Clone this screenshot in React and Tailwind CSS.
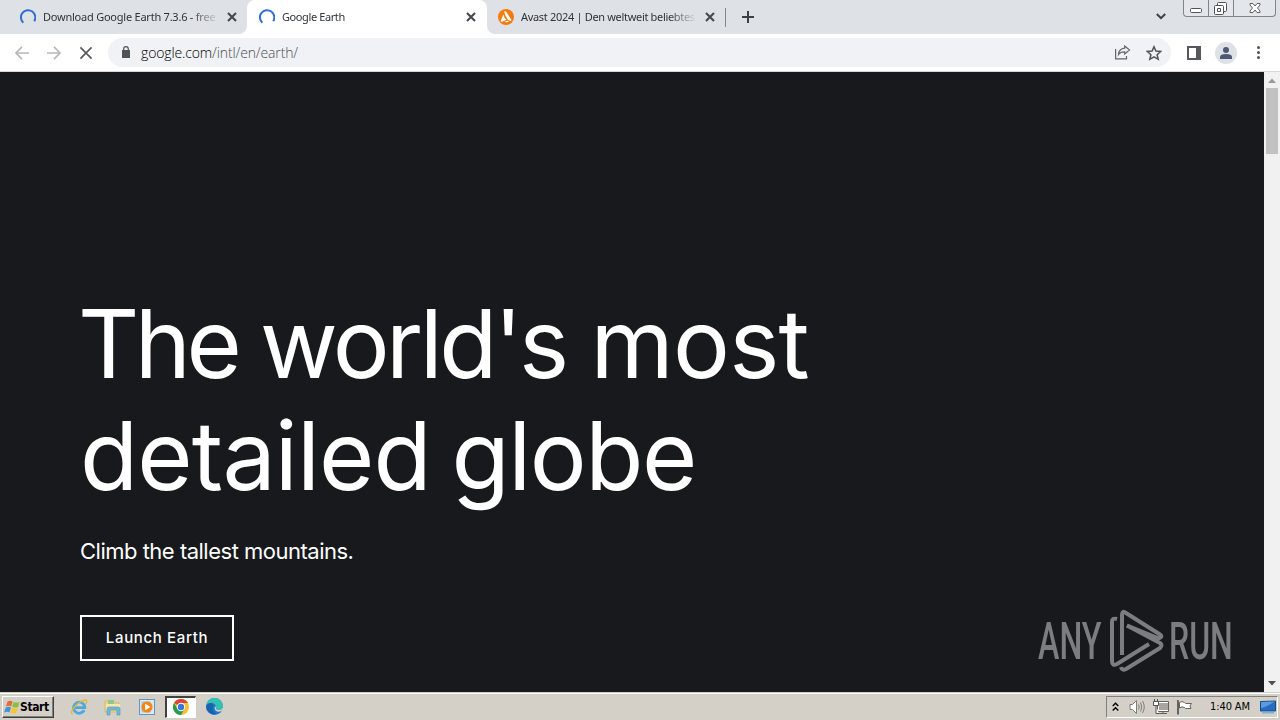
import React from "react";

function Spinner() {
  return (
    <svg className="h-4 w-4 shrink-0" viewBox="0 0 16 16" fill="none">
      <path d="M3.300 13.700A7.200 7.200 0 1 1 14.200 12.200" stroke="#2f6fcf" strokeWidth="2" />
    </svg>
  );
}

function Avast() {
  return (
    <svg className="h-4 w-4 shrink-0" viewBox="0 0 16 16">
      <circle cx="8" cy="8" r="8" fill="#f57c0a" />
      <path d="M6.200 2.700Q7.200 1.600 8.200 2.800L13.300 10.700Q13.600 12 12.300 12L10.200 11Q6.800 7 6.200 2.700Z" fill="#fff" />
      <path d="M5.300 5.600Q6.100 9.300 8.400 10.800L4.100 12.700Q2.500 12.900 2.800 11.400ZM6.500 12.700L9.600 11.800 11 12.800Q8.800 13.800 6.500 12.700Z" fill="#fff" />
    </svg>
  );
}

function Cross({ className, color = "#45484d", width = 2 }) {
  return (
    <svg className={className} viewBox="0 0 10 10">
      <path d="M1 1L9 9M9 1L1 9" stroke={color} strokeWidth={width} fill="none" />
    </svg>
  );
}

function Tab({ icon, title, textClass, active }) {
  return (
    <div className={"relative flex h-[34px] shrink-0 items-center pl-3 " + (active ? "w-[240px] rounded-t-lg bg-white" : "w-[239px] last-of-type:-ml-px")}>
      {active && (
        <>
          <svg className="absolute -left-2 bottom-0 h-2 w-2" viewBox="0 0 8 8"><path d="M8 0V8H0A8 8 0 0 0 8 0Z" fill="#fff" /></svg>
          <svg className="absolute -right-2 bottom-0 h-2 w-2" viewBox="0 0 8 8"><path d="M0 0V8H8A8 8 0 0 1 0 0Z" fill="#fff" /></svg>
        </>
      )}
      {icon}
      <div className="ml-[7px] h-[34px] w-[176px] whitespace-nowrap text-[11px] leading-[34px] text-[#303338] [mask-image:linear-gradient(to_right,black_148px,transparent_176px)]">
        <span className={textClass}>{title}</span>
      </div>
      <Cross className="ml-2 h-[10px] w-[10px] shrink-0" width={2.1} />
    </div>
  );
}

function TabStrip() {
  return (
    <div className="flex h-[34px] shrink-0 bg-[#dee1e6] pl-2">
      <div className="flex w-[717px] shrink-0">
        <Tab icon={<Spinner />} title="Download Google Earth 7.3.6 - free" textClass="tracking-[-0.230px]" />
        <Tab icon={<Spinner />} title="Google Earth" textClass="tracking-[-0.400px]" active />
        <Tab icon={<Avast />} title="Avast 2024 | Den weltweit beliebtes" textClass="tracking-[-0.320px]" />
      </div>
      <div className="mt-2 h-[19px] w-px bg-[#85888d]" />
      <svg className="mt-[11px] ml-4 h-3 w-3" viewBox="0 0 12 12"><path d="M6 0V12M0 6H12" stroke="#3c4043" strokeWidth="2" /></svg>
      <svg className="mt-[13px] ml-[402px] h-[7px] w-[10px]" viewBox="0 0 10 7"><path d="M.8 1L5 5.200 9.200 1" stroke="#3c4043" strokeWidth="2" fill="none" /></svg>
      <div className="ml-[17px] flex h-[17px] w-[93px] rounded-b-[4px] border border-t-0 border-[#80848c] bg-[#e3e6eb]">
        <div className="flex w-[25px] justify-center border-r border-[#80848c]">
          <svg className="h-4 w-3" viewBox="0 0 12 16"><rect x=".5" y="8.500" width="11" height="4" rx="1" fill="#fff" stroke="#50535a" /></svg>
        </div>
        <div className="flex w-[25px] justify-center border-r border-[#80848c]">
          <svg className="h-4 w-[14px]" viewBox="0 0 14 16"><rect x="3.500" y="2.500" width="9" height="9" rx="1" fill="#fff" stroke="#50535a" /><rect x=".5" y="5.500" width="9" height="9" rx="1" fill="#fff" stroke="#50535a" /><path d="M3.500 8.500H6.500V11.500H3.500Z" fill="#fff" stroke="#50535a" /></svg>
        </div>
        <div className="flex flex-1 justify-center">
          <svg className="h-4 w-3" viewBox="0 0 12 16"><path d="M1 3.500H4L6 6 8 3.500H11V5L8.500 8 11 11V12.500H8L6 10 4 12.500H1V11L3.500 8 1 5Z" fill="#fff" stroke="#50535a" strokeWidth=".9" /></svg>
        </div>
      </div>
    </div>
  );
}

function Toolbar() {
  return (
    <div className="flex h-[38px] shrink-0 items-center border-b border-[#d5d7da] bg-white pl-[15px]">
      <svg className="h-[14px] w-[14px]" viewBox="0 0 14 14"><path d="M14 7H1M7 .8L.9 7 7 13.200" stroke="#b6b8bb" strokeWidth="1.700" fill="none" /></svg>
      <svg className="ml-[18px] h-[14px] w-[14px]" viewBox="0 0 14 14"><path d="M0 7H13M7 .8L13.100 7 7 13.200" stroke="#b6b8bb" strokeWidth="1.700" fill="none" /></svg>
      <Cross className="ml-[18px] h-[14px] w-[14px]" color="#55585c" width={1.2} />
      <div className="ml-[15px] flex h-[29px] w-[1063px] items-center rounded-full bg-[#f0f2f5]">
        <svg className="mb-[2px] ml-[14px] h-3 w-2" viewBox="0 0 8 12"><path d="M0 4H8V12H0Z" fill="#505357" /><path d="M1.700 4.500V3A2.300 2.300 0 0 1 6.300 3V4.500" fill="none" stroke="#505357" strokeWidth="1.200" /></svg>
        <div className="ml-[11px] w-[940px] font-['Open_Sans'] text-[14px] font-light leading-7 tracking-[-0.130px] text-[#4a4e53]">
          <span className="text-black">google.com</span>/intl/en/earth/
        </div>
        <svg className="ml-[34px] h-[15px] w-4" viewBox="0 0 16 15" fill="none" stroke="#62656a" strokeWidth="1.200"><path d="M.6 4V13.900H11.500V11" /><path d="M9.700 1L14.500 5 9.700 9V6.800Q5.500 6.700 3.500 9.500Q4 3.800 9.700 3.200Z" /></svg>
        <svg className="ml-[15px] h-4 w-4" viewBox="0 0 16 16"><path d="M8 1.700L9.900 6.100 14.700 6.500 11.100 9.700 12.200 14.300 8 11.900 3.800 14.300 4.900 9.700 1.300 6.500 6.100 6.100Z" fill="none" stroke="#505357" strokeWidth="1.500" /></svg>
      </div>
      <svg className="ml-4 h-[14px] w-[14px]" viewBox="0 0 14 14"><path d="M0 0H14V14H0ZM2 2V12H9V2Z" fill="#56585c" fillRule="evenodd" /></svg>
      <svg className="ml-[14px] h-[22px] w-[22px]" viewBox="0 0 22 22"><circle cx="11" cy="11" r="11" fill="#dee1e6" /><circle cx="11" cy="8" r="3" fill="#4c5a78" /><path d="M5 17V15Q5 12 11 12T17 15V17Z" fill="#4c5a78" /></svg>
      <svg className="ml-5 h-[13px] w-[3px]" viewBox="0 0 3 13" fill="#505357"><circle cx="1.500" cy="1.500" r="1.500" /><circle cx="1.500" cy="6.500" r="1.500" /><circle cx="1.500" cy="11.500" r="1.500" /></svg>
    </div>
  );
}

function Watermark() {
  return (
    <div className="absolute top-[606px] left-[1038px] h-[68px] w-[200px] font-[Roboto] text-[52px] leading-[68px] font-medium text-[#7b7d80]">
      <span className="absolute top-[2px] left-0 origin-left scale-x-[0.62]">ANY</span>
      <svg className="absolute top-[3px] left-[71px] h-[65px] w-[56px]" viewBox="0 0 56 65" fill="none" stroke="#7b7d80" strokeWidth="4" strokeLinejoin="round">
        <path d="M8 10Q3 8.500 3 13V52Q3 57.500 8 55L40 35" />
        <path d="M13 46V6Q13 1 17 4L51 25.500Q53 27 52 28L50 29.500L18 16.500" />
        <path d="M18 16.500L51 34Q54 36 51 39L17 60Q13 62 12 58" />
      </svg>
      <span className="absolute top-[2px] left-[131px] origin-left scale-x-[0.615]">RUN</span>
    </div>
  );
}

function Page() {
  return (
    <div className="flex h-[620px] shrink-0">
      <main className="w-[1264px] bg-[#17191c] pl-20 font-[Inter] text-white">
        <h1 className="pt-[216px] text-[95px] leading-[112px] whitespace-nowrap tracking-[-2px]">
          <span className="block">
            <span className="-ml-[2px] tracking-[-4.500px]">The</span> <span className="-ml-[2px] tracking-[-3.500px]">world's</span> <span className="tracking-[-0.700px]">most</span>
          </span>
          <span className="block">
            <span className="tracking-[-0.900px]">detailed</span> <span className="-ml-1 tracking-[-1.500px]">globe</span>
          </span>
        </h1>
        <p className="mt-[23px] text-[22px] leading-8 tracking-[-0.500px]">Climb the tallest mountains.</p>
        <button className="mt-12 block h-[46px] w-[154px] border-2 border-white text-[15px] leading-[42px] font-medium tracking-[0.650px]">Launch Earth</button>
      </main>
      <div className="flex w-4 flex-col items-center bg-[#f1f1f1]">
        <svg className="h-4 w-4" viewBox="0 0 16 16"><path d="M4 11L8 6.500 12 11Z" fill="#9b9b9b" /></svg>
        <div className="h-[66px] w-3 bg-[#c1c1c1]" />
        <div className="flex-1" />
        <svg className="h-4 w-4" viewBox="0 0 16 16"><path d="M4 5L8 9.500 12 5Z" fill="#505050" /></svg>
      </div>
    </div>
  );
}

function IeIcon() {
  return (
    <svg className="h-[18px] w-[18px]" viewBox="0 0 18 18" fill="none">
      <path d="M14.200 12.200A5.600 5.600 0 1 1 14.800 9.700H5" stroke="#4ba9df" strokeWidth="2.800" />
      <path d="M2.500 16.500Q-.5 14.500 5 8.500T16 2Q18 3 15.500 6.500" stroke="#e3b73c" strokeWidth="1.300" />
    </svg>
  );
}

function FolderIcon() {
  return (
    <svg className="h-[18px] w-[18px]" viewBox="0 0 18 18">
      <path d="M1 3H7L8 5H15V14H1Z" fill="#ecd77e" stroke="#c7ae56" strokeWidth=".6" />
      <path d="M4 2H10V6H4Z" fill="#8dc989" /><path d="M2 6H16V12H2Z" fill="#f5e8a8" />
      <path d="M3 17V11Q3 9 5 9H14Q16 9 16 11V17H13V12H6V17Z" fill="#75b8dc" stroke="#5094ba" strokeWidth=".6" />
    </svg>
  );
}

function MediaIcon() {
  return (
    <svg className="h-4 w-4" viewBox="0 0 16 16">
      <rect x=".5" y=".5" width="15" height="15" fill="#d9e8f2" stroke="#6397bf" /><rect x="2.500" y="2.500" width="9" height="11" fill="#a6c8df" />
      <circle cx="8" cy="8" r="5.600" fill="#f28718" /><path d="M6.200 4.700L11.500 8 6.200 11.300Z" fill="#fff" />
    </svg>
  );
}

function ChromeIcon() {
  return (
    <svg className="h-4 w-4" viewBox="0 0 16 16">
      <circle cx="8" cy="8" r="8" fill="#f4c430" />
      <path d="M8 8L1.070 4A8 8 0 0 1 14.930 4H8Z" fill="#db4437" />
      <path d="M1.070 4A8 8 0 0 0 8 16L11.500 10 8 8 4.500 10Z" fill="#269b55" />
      <circle cx="8" cy="8" r="4.200" fill="#fff" /><circle cx="8" cy="8" r="3.200" fill="#3577df" />
    </svg>
  );
}

function EdgeIcon() {
  return (
    <svg className="h-[17px] w-[17px]" viewBox="0 0 17 17">
      <circle cx="8.500" cy="8.500" r="8.500" fill="#1c79ca" />
      <path d="M.3 7A8.400 8.400 0 0 1 17 8Q17 12 12.500 12 10 12 10 10 10.500 6.500 7.300 5.200 3.500 4 .3 7Z" fill="#35c1b1" />
      <path d="M.2 8Q2 4.200 6 5.500 8.500 6.500 7 8.500 5.500 13 10 15.500L7 16.500Q0 14 .2 8Z" fill="#1763ae" />
      <path d="M9 8Q7.500 12.500 12 13.700 14.500 14.200 17 12V9Q16.500 12 12.500 12 9.500 11.500 10 9.500Z" fill="#d4d0c8" />
    </svg>
  );
}

function Taskbar() {
  return (
    <div className="flex h-7 shrink-0 items-center border-t border-[#d4d0c8] bg-[#d4d0c8] font-['DejaVu_Sans_Condensed'] text-[11px] text-black shadow-[inset_0_1px_0_#fff]">
      <div className="mt-px ml-[2px] flex h-[22px] w-[52px] items-center border border-t-white border-r-[#404040] border-b-[#404040] border-l-white shadow-[inset_-1px_-1px_0_#808080]">
        <svg className="ml-px h-4 w-[17px] shrink-0" viewBox="0 0 17 16">
          <path d="M3.500 2.500Q6 1 8.500 2.500L7.200 7.500Q5 6.200 2 7.500Z" fill="#e66a35" /><path d="M9.500 3Q12 4.200 15.500 3L14 8Q11 9.200 8.200 7.800Z" fill="#8abf3c" />
          <path d="M1.800 8.500Q5 7.200 7 8.500L5.500 13.500Q3 12 0 13.500Z" fill="#4592d5" /><path d="M8 8.800Q11 10.200 13.800 9L12.300 14Q9 15.200 6.500 13.800Z" fill="#f6c62f" />
        </svg>
        <b className="-ml-px text-[12px] tracking-[-0.400px]">Start</b>
      </div>
      <div className="ml-4 flex w-[160px] shrink-0 items-center">
        <div className="mt-px w-[34px] shrink-0"><IeIcon /></div>
        <div className="mt-px w-[35px] shrink-0"><FolderIcon /></div>
        <div className="w-[26px] shrink-0"><MediaIcon /></div>
        <div className="flex h-[22px] w-[31px] shrink-0 items-center justify-center border-t-2 border-r border-b border-l-2 border-t-[#404040] border-r-white border-b-white border-l-[#404040] bg-white"><ChromeIcon /></div>
        <div className="ml-[10px]"><EdgeIcon /></div>
      </div>
      <div className="mt-px mr-[2px] ml-auto flex h-[22px] w-[172px] items-center border border-t-[#808080] border-r-white border-b-white border-l-[#808080]">
        <svg className="ml-[5px] h-[10px] w-[7px] shrink-0" viewBox="0 0 7 10" fill="none" stroke="#000" strokeWidth="1.400"><path d="M.7 4L3.500 1.200 6.300 4M.7 8.500L3.500 5.700 6.300 8.500" /></svg>
        <svg className="ml-[10px] h-4 w-4 shrink-0" viewBox="0 0 16 16" fill="none" stroke="#7e7c78"><path d="M1 5.500H3.500L7.500 1.500V14.500L3.500 10.500H1Z" fill="#fff" /><path d="M9.500 5.500Q11 8 9.500 10.500M11.500 3.500Q14 8 11.500 12.500M13.500 2Q17 8 13.500 14" /></svg>
        <svg className="ml-2 h-4 w-4 shrink-0" viewBox="0 0 16 16"><path d="M5.500 3.500H15.500V11.500H5.500Z" fill="#a6a59f" stroke="#fff" /><path d="M4.500 2.500H15.500V12.500H4.500ZM6 14.500H14M10 12V15" fill="none" stroke="#65635f" /><path d="M.5 2.500H5.500V6.500H.5ZM1.500 0V2M4.500 0V2M3 7V14.500H6" fill="#fff" stroke="#55534f" /></svg>
        <svg className="ml-[7px] h-4 w-4 shrink-0" viewBox="0 0 16 16"><path d="M1.500 1V15.500M1.500 1.500H2.500V15.500" fill="none" stroke="#65635f" /><path d="M3.500 3.500Q6 1.500 8.500 3.500L9.500 4.500H15.500L14 7 15 9.500H9.500L8.500 8.500Q6 7 3.500 9Z" fill="#fff" stroke="#65635f" /></svg>
        <span className="ml-[18px] w-[44px] shrink-0 whitespace-nowrap tracking-[-0.100px]">1:40 AM</span>
        <svg className="ml-[6px] h-[14px] w-4 shrink-0" viewBox="0 0 16 14"><path d="M.5 1.500L15.500 1V11H.5Z" fill="#266cc0" stroke="#174982" /><path d="M1 2L15 1.500 5 7 1 8Z" fill="#5b9bdc" /><path d="M2 12.500H14" stroke="#83aed6" strokeWidth="2" /></svg>
      </div>
    </div>
  );
}

export default function App() {
  return (
    <div className="relative flex h-[720px] w-[1280px] flex-col overflow-hidden bg-white font-['Noto_Sans',sans-serif]">
      <TabStrip />
      <Toolbar />
      <Page />
      <Taskbar />
      <Watermark />
    </div>
  );
}
